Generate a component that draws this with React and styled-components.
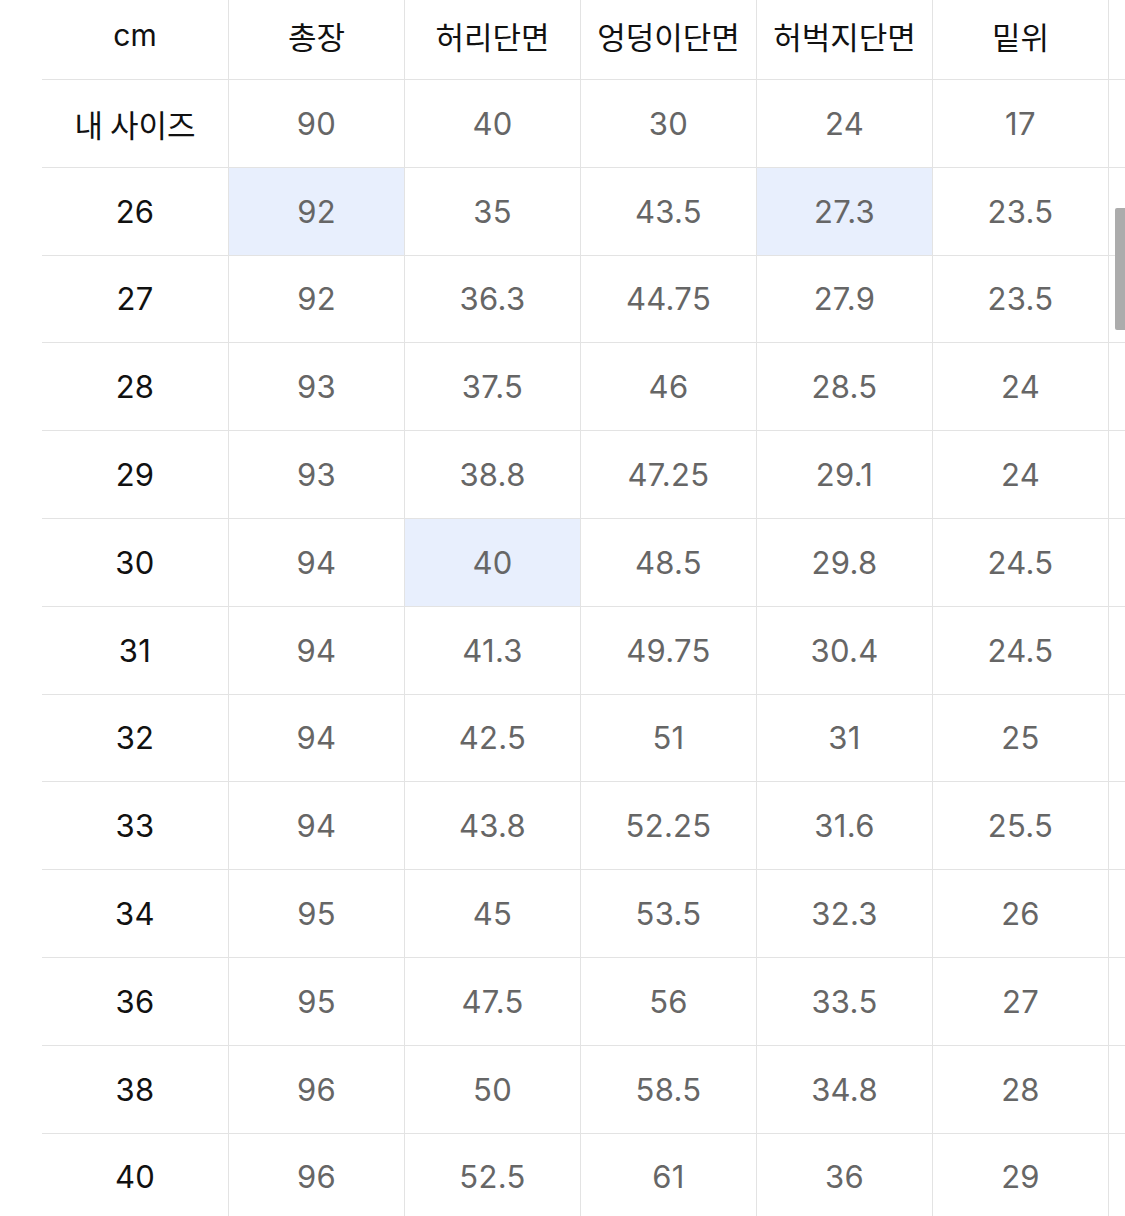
import React from 'react'
import styled, { createGlobalStyle } from 'styled-components'

const GlobalStyle = createGlobalStyle`
html, body {
    margin:0;
    padding:0;
    background:#fff;
    overflow:hidden;
}
body {
    font-family:"Inter", "Noto Sans CJK KR", sans-serif;
}
`
const Page = styled.div`
position:relative;
width:1125px;
height:1216px;
overflow:hidden;
padding-left:42px;
box-sizing:border-box;
`
const Grid = styled.div`
display:grid;
grid-template-columns:186px repeat(6, 176px);
grid-template-rows:80px;
grid-auto-rows:87.8px;
width:max-content;
`
const Cell = styled.div`
display:flex;
align-items:center;
justify-content:center;
box-sizing:border-box;
border-bottom:1.5px solid #e3e3e3;
border-left:${props => props.$first ? 'none' : '1.5px solid #e3e3e3'};
background:${props => props.$hl ? '#e8effd' : '#fff'};
color:${props => props.$first ? '#111' : '#666'};
font-size:31px;
letter-spacing:0.3px;
`
const HeadCell = styled(Cell)`
padding-bottom:9px;
color:#111;
font-size:31px;
`
const HeadLabel = styled.span`
font-family:${props => props.$latin ? '"Inter", sans-serif' : '"Noto Sans CJK KR", sans-serif'};
font-size:${props => props.$latin ? '30px' : '31px'};
letter-spacing:0;
`
const MyLabel = styled.span`
font-family:"Noto Sans CJK KR", sans-serif;
font-size:31px;
letter-spacing:0;
color:#111;
`
const Thumb = styled.div`
position:absolute;
left:1115px;
top:208px;
width:10px;
height:122px;
background:#acacac;
border-radius:2px 0 0 2px;
`

const headers = ['cm', '총장', '허리단면', '엉덩이단면', '허벅지단면', '밑위', '']
const mySize = ['90', '40', '30', '24', '17']
const rows = [
    ['26', '92', '35', '43.5', '27.3', '23.5'],
    ['27', '92', '36.3', '44.75', '27.9', '23.5'],
    ['28', '93', '37.5', '46', '28.5', '24'],
    ['29', '93', '38.8', '47.25', '29.1', '24'],
    ['30', '94', '40', '48.5', '29.8', '24.5'],
    ['31', '94', '41.3', '49.75', '30.4', '24.5'],
    ['32', '94', '42.5', '51', '31', '25'],
    ['33', '94', '43.8', '52.25', '31.6', '25.5'],
    ['34', '95', '45', '53.5', '32.3', '26'],
    ['36', '95', '47.5', '56', '33.5', '27'],
    ['38', '96', '50', '58.5', '34.8', '28'],
    ['40', '96', '52.5', '61', '36', '29'],
]
// highlighted cells: size 26 -> 총장, 허벅지 ; size 30 -> 허리
const highlights = { '26': [1, 4], '30': [2] }

const App = () => {
    return (
        <>
            <GlobalStyle />
            <Page>
                <Grid>
                    {headers.map((h, i) => (
                        <HeadCell key={'h' + i} $first={i === 0}>
                            <HeadLabel $latin={i === 0}>{h}</HeadLabel>
                        </HeadCell>
                    ))}
                    <Cell $first><MyLabel>내 사이즈</MyLabel></Cell>
                    {mySize.map((v, i) => (
                        <Cell key={'m' + i}>{v}</Cell>
                    ))}
                    <Cell />
                    {rows.map((r) => (
                        <React.Fragment key={r[0]}>
                            {r.map((v, i) => (
                                <Cell key={r[0] + '-' + i} $first={i === 0} $hl={(highlights[r[0]] || []).includes(i)}>{v}</Cell>
                            ))}
                            <Cell />
                        </React.Fragment>
                    ))}
                </Grid>
                <Thumb />
            </Page>
        </>
    )
}
export default App;
